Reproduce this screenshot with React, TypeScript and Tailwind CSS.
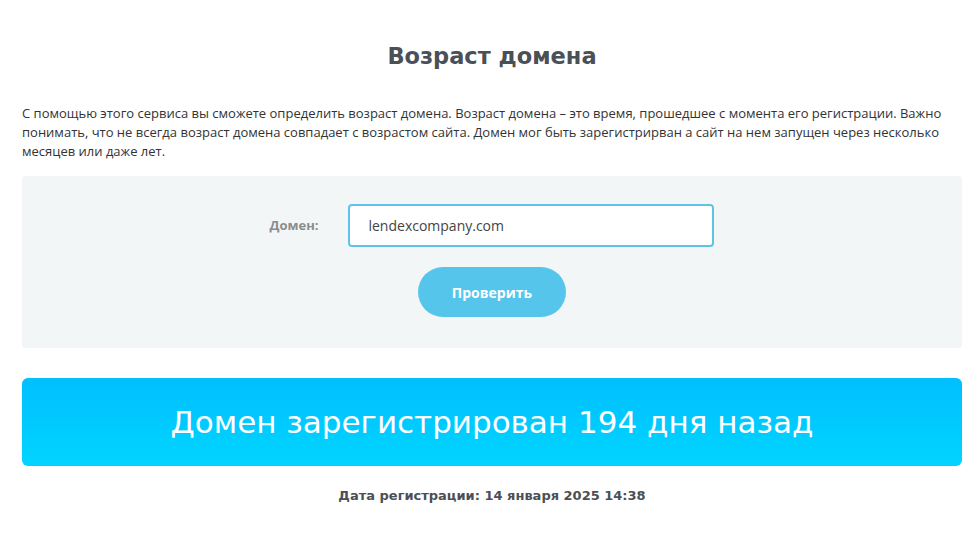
import React from 'react';

export default function App() {
  return (
    <div className="min-h-[548px] bg-white font-['Open_Sans',sans-serif]">
      <div className="ml-[22px] w-[940px] pt-[40px]">
        <h1 className="text-center font-['DejaVu_Sans',sans-serif] text-[22.5px] font-bold leading-[32px] text-[#4b5056]">
          Возраст домена
        </h1>

        <p className="mt-[32px] text-[13px] leading-[19px] text-[#333]">
          С помощью этого сервиса вы сможете определить возраст домена. Возраст домена – это время,
          прошедшее с момента его регистрации. Важно понимать, что не всегда возраст домена совпадает
          с возрастом сайта. Домен мог быть зарегистрирван а сайт на нем запущен через несколько месяцев
          или даже лет.
        </p>

        <div className="mt-[15px] flex h-[172px] flex-col items-center rounded-[3px] bg-[#f3f6f7] pt-[28px]">
          <div className="flex items-center">
            <label className="mr-[30px] text-[13px] font-bold text-[#8c8c8c]">Домен:</label>
            <input
              defaultValue="lendexcompany.com"
              className="h-[43px] w-[366px] rounded-[4px] border-2 border-[#5ec3e6] bg-white px-[18px] text-[14px] text-[#444] outline-none"
            />
          </div>
          <button className="mt-[20px] h-[50px] w-[148px] rounded-full bg-[#56c5ec] text-[14px] font-bold text-white">
            Проверить
          </button>
        </div>

        <div className="mt-[30px] flex h-[88px] items-center justify-center rounded-[6px] bg-gradient-to-b from-[#00bfff] to-[#00d5ff]">
          <span className="font-['DejaVu_Sans',sans-serif] text-[31px] text-white">
            Домен зарегистрирован 194 дня назад
          </span>
        </div>

        <p className="mt-[20px] text-center font-['DejaVu_Sans',sans-serif] text-[13px] font-bold text-[#4b5056]">
          Дата регистрации: 14 января 2025 14:38
        </p>
      </div>
    </div>
  );
}
